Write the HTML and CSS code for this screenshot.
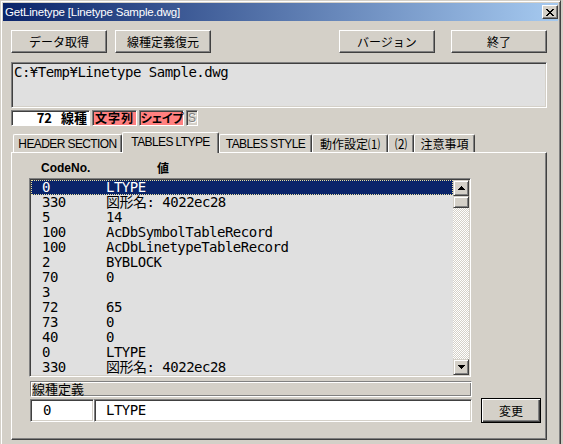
FILE: index.html
```html
<!DOCTYPE html>
<html lang="ja">
<head>
<meta charset="utf-8">
<title>GetLinetype</title>
<link rel="stylesheet" href="styles.css">
</head>
<body>
<div class="window">
  <div class="titlebar">
    <span class="title">GetLinetype [Linetype Sample.dwg]</span>
    <span class="close"><svg width="8" height="7" viewBox="0 0 8 7" shape-rendering="crispEdges"><path fill="#000" d="M0 0h2v1H0zM6 0h2v1H6zM1 1h2v1H1zM5 1h2v1H5zM2 2h4v1H2zM3 3h2v1H3zM2 4h4v1H2zM1 5h2v1H1zM5 5h2v1H5zM0 6h2v1H0zM6 6h2v1H6z"/></svg></span>
  </div>
  <div class="client">
    <div class="toolbar">
      <div class="btn">データ取得</div>
      <div class="btn btn-second">線種定義復元</div>
      <div class="spacer"></div>
      <div class="btn">バージョン</div>
      <div class="btn btn-exit">終了</div>
    </div>
    <div class="pathbox mono">C:¥Temp¥Linetype Sample.dwg</div>
    <div class="status">
      <div class="st st-count"><span class="num">72</span><span>線種</span></div>
      <div class="st st-pink st-moji">文字列</div>
      <div class="st st-pink st-shape">シェイプ</div>
      <div class="st st-s">S</div>
    </div>
    <div class="tabrow">
      <div class="tab tab-header">HEADER SECTION</div>
      <div class="tab tab-active">TABLES LTYPE</div>
      <div class="tab tab-style">TABLES STYLE</div>
      <div class="tab tab-op1 jp">動作設定⑴</div>
      <div class="tab tab-op2 jp">⑵</div>
      <div class="tab tab-note jp">注意事項</div>
    </div>
    <div class="panel">
      <div class="listhead">
        <span class="h-code">CodeNo.</span>
        <span class="h-val jp">値</span>
      </div>
      <div class="listbox">
        <div class="rows mono">
          <div class="row selected"><span class="c">0</span><span class="v">LTYPE</span></div>
          <div class="row"><span class="c">330</span><span class="v">図形名: 4022ec28</span></div>
          <div class="row"><span class="c">5</span><span class="v">14</span></div>
          <div class="row"><span class="c">100</span><span class="v">AcDbSymbolTableRecord</span></div>
          <div class="row"><span class="c">100</span><span class="v">AcDbLinetypeTableRecord</span></div>
          <div class="row"><span class="c">2</span><span class="v">BYBLOCK</span></div>
          <div class="row"><span class="c">70</span><span class="v">0</span></div>
          <div class="row"><span class="c">3</span><span class="v"></span></div>
          <div class="row"><span class="c">72</span><span class="v">65</span></div>
          <div class="row"><span class="c">73</span><span class="v">0</span></div>
          <div class="row"><span class="c">40</span><span class="v">0</span></div>
          <div class="row"><span class="c">0</span><span class="v">LTYPE</span></div>
          <div class="row"><span class="c">330</span><span class="v">図形名: 4022ec28</span></div>
        </div>
        <div class="vscroll">
          <div class="sbtn"><svg width="7" height="4" viewBox="0 0 7 4" shape-rendering="crispEdges"><path fill="#000" d="M3 0h1v1h1v1h1v1h1v1H0V3h1V2h1V1h1z"/></svg></div>
          <div class="thumb"></div>
          <div class="track"></div>
          <div class="sbtn"><svg width="7" height="4" viewBox="0 0 7 4" shape-rendering="crispEdges"><path fill="#000" d="M0 0h7v1H6v1H5v1H4v1H3V3H2V2H1V1H0z"/></svg></div>
        </div>
      </div>
      <div class="deflabel jp">線種定義</div>
      <div class="editrow">
        <div class="field f-code mono">0</div>
        <div class="field f-val mono">LTYPE</div>
        <div class="btn btn-default">変更</div>
      </div>
    </div>
  </div>
</div>
</body>
</html>
```

FILE: styles.css
```css
* { box-sizing: border-box; margin: 0; padding: 0; }
html, body { width: 563px; height: 444px; overflow: hidden; background: #d4d0c8; }
body { font-family: "Liberation Sans", "Noto Sans CJK JP", sans-serif; font-size: 12px; line-height: 14px; color: #000; }
.jp { font-family: "Noto Sans CJK JP", sans-serif; }
.mono { font-family: "DejaVu Sans Mono", "Noto Sans CJK JP", monospace; font-size: 14px; letter-spacing: -0.5px; line-height: 15px; }

.window {
  width: 561px; height: 448px;
  border: 1px solid; border-color: #d4d0c8 #404040 #404040 #d4d0c8;
  box-shadow: inset 1px 1px #fff, inset -1px -1px #808080;
  padding: 2px; display: flex; flex-direction: column;
}
.titlebar {
  height: 18px; flex: none; display: flex; align-items: center;
  padding-left: 2px; color: #fff;
  background: linear-gradient(to right, #0a246a, #a6caf0);
}
.title { flex: 1; font-size: 11.5px; letter-spacing: -0.2px; white-space: nowrap; }
.close {
  width: 16px; height: 14px; display: flex; align-items: center; justify-content: center;
  background: #d4d0c8; border: 1px solid; border-color: #fff #404040 #404040 #fff;
  box-shadow: inset -1px -1px #808080;
}

.client { flex: 1; display: flex; flex-direction: column; padding: 0 11px 0 8px; }

.toolbar { display: flex; height: 23px; margin-top: 9px; flex: none; }
.btn {
  display: flex; align-items: center; justify-content: center;
  background: #d4d0c8; border: 1px solid; border-color: #fff #404040 #404040 #fff;
  box-shadow: inset -1px -1px #808080;
  font-family: "Noto Sans CJK JP", sans-serif; font-size: 12px; white-space: nowrap;
}
.toolbar .btn { width: 96px; }
.btn-second { margin-left: 8px; }
.btn-exit { margin-left: 16px; }
.spacer { flex: 1; }

.pathbox {
  margin-top: 9px; height: 46px; flex: none; background: #e0e0e0;
  border: 1px solid; border-color: #808080 #fff #fff #808080;
  box-shadow: inset 1px 1px #404040, inset -1px -1px #d4d0c8;
  padding: 2px 2px 0 2px; white-space: nowrap;
}

.status { display: flex; gap: 2px; margin-top: 2px; height: 16px; flex: none; }
.st {
  height: 16px; display: flex; align-items: center; justify-content: center;
  border: 1px solid; border-color: #808080 #fff #fff #808080;
  box-shadow: inset 1px 1px #404040;
  font-family: "Noto Sans CJK JP", sans-serif; font-weight: bold; font-size: 12px; white-space: nowrap;
}
.st-count { width: 79px; background: #fff; justify-content: flex-end; padding-right: 2px; font-size: 13px; }
.st-count .num { margin-right: 9px; }
.st-pink { width: 45px; background: #ff8080; }
.st-moji { letter-spacing: 1px; }
.st-shape { letter-spacing: -1.5px; }
.st-s { width: 12px; background: #d4d0c8; color: #808080; text-shadow: 1px 1px #fff; font-family: "Liberation Sans", sans-serif; font-weight: normal; }

.tabrow { display: flex; align-items: flex-start; margin-top: 6px; height: 20px; padding-left: 2px; flex: none; }
.tab {
  height: 18px; margin-top: 2px; display: flex; align-items: center; justify-content: center;
  background: #d4d0c8; border-top: 1px solid #fff; border-left: 1px solid #fff; border-right: 1px solid #404040;
  box-shadow: inset -1px 0 #808080; border-radius: 2px 2px 0 0;
  font-size: 12px; letter-spacing: -0.6px; white-space: nowrap; padding-top: 1px;
}
.tab.jp { letter-spacing: 0; }
.tab-header { width: 109px; }
.tab-active { width: 97px; height: 21px; margin-top: 0; position: relative; z-index: 1; padding-top: 0; padding-bottom: 2px; }
.tab-style { width: 93px; }
.tab-op1 { width: 76px; }
.tab-op2 { width: 26px; }
.tab-note { width: 61px; }

.panel {
  height: 288px; flex: none; display: flex; flex-direction: column;
  border-top: 1px solid #fff; border-left: 1px solid #fff; border-right: 1px solid #404040; border-bottom: 1px solid #404040;
  box-shadow: inset -1px -1px #808080;
  padding: 8px 0 0 17px;
}
.listhead { display: flex; height: 14px; padding-left: 12px; font-weight: bold; }
.h-code { width: 116px; }
.h-val { font-weight: bold; line-height: 14px; }

.listbox {
  margin-top: 3px; width: 442px; height: 199px; display: flex;
  background: #e0e0e0; border: 1px solid; border-color: #808080 #fff #fff #808080;
  box-shadow: inset 1px 1px #404040, inset -1px -1px #d4d0c8; padding: 1px;
}
.rows { flex: 1; display: flex; flex-direction: column; }
.row { height: 15px; display: flex; white-space: nowrap; }
.row .c { width: 75px; padding-left: 11px; }
.row.selected { background: #0a246a; color: #fff; outline: 1px dotted #e8e0a0; outline-offset: -1px; }

.vscroll { width: 16px; display: flex; flex-direction: column; }
.sbtn, .thumb {
  background: #d4d0c8; border: 1px solid; border-color: #d4d0c8 #404040 #404040 #d4d0c8;
  box-shadow: inset 1px 1px #fff, inset -1px -1px #808080;
}
.sbtn { height: 16px; display: flex; align-items: center; justify-content: center; }
.thumb { height: 12px; }
.track {
  flex: 1;
  background-image: conic-gradient(#fff 25%, #d4d0c8 0 50%, #fff 0 75%, #d4d0c8 0);
  background-size: 2px 2px;
}

.deflabel {
  margin-top: 4px; margin-left: 1px; width: 442px; height: 16px;
  border: 1px solid; border-color: #808080 #fff #fff #808080;
  box-shadow: inset 1px 1px #fff, inset -1px -1px #808080;
  font-size: 13px; line-height: 14px; padding-left: 1px;
}
.editrow { display: flex; align-items: center; height: 25px; margin-top: 1px; margin-left: 1px; }
.field {
  height: 23px; background: #fff; display: flex; align-items: center;
  border: 1px solid; border-color: #808080 #fff #fff #808080;
  box-shadow: inset 1px 1px #404040, inset -1px -1px #d4d0c8; white-space: nowrap;
}
.f-code { width: 64px; padding-left: 12px; }
.f-val { width: 378px; padding-left: 11px; }
.btn-default {
  width: 60px; height: 25px; margin-left: 9px; border: 1px solid #000;
  box-shadow: inset 1px 1px #fff, inset -1px -1px #404040, inset -2px -2px #808080;
}
```
